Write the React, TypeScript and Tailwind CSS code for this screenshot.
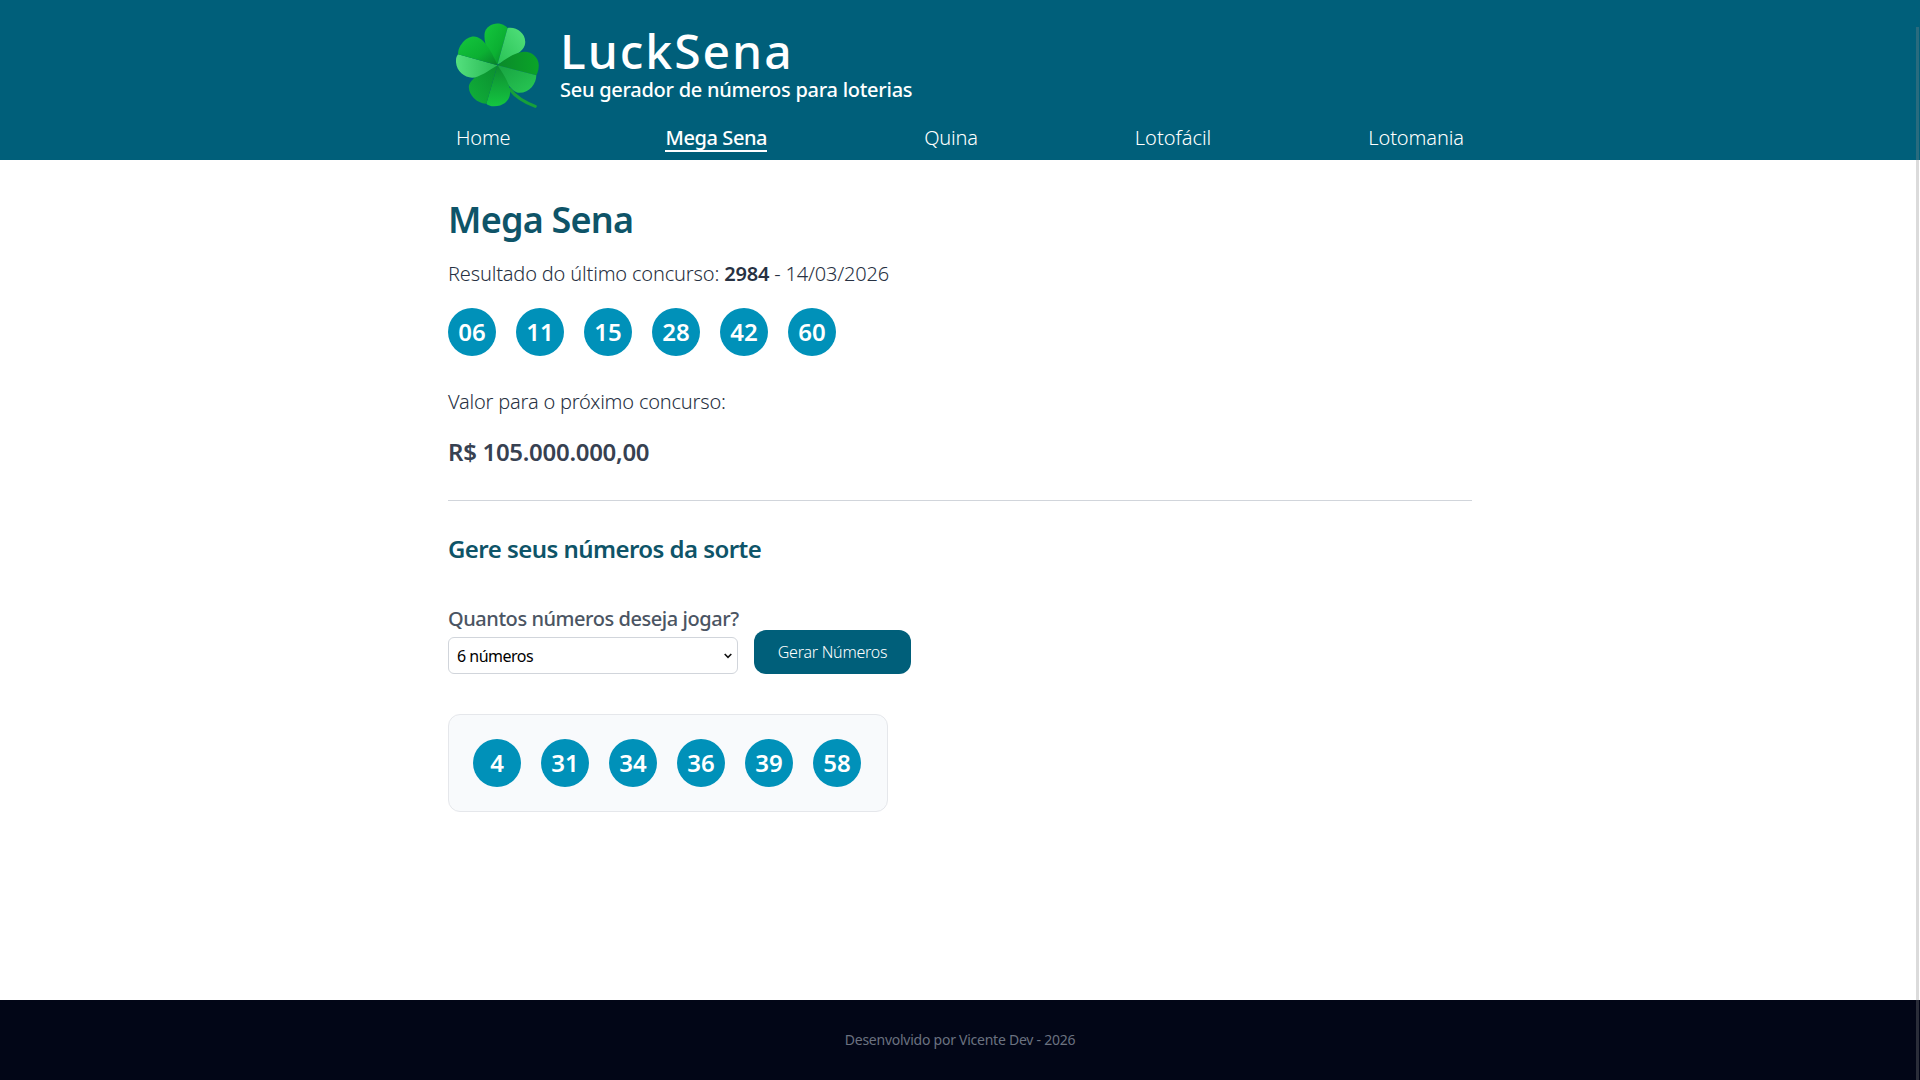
const balls1 = ["06", "11", "15", "28", "42", "60"];
const balls2 = ["4", "31", "34", "36", "39", "58"];

function Clover() {
  return (
    <svg viewBox="37 26 246 250" className="w-[83px] h-[85px] shrink-0" aria-hidden="true">
      <defs>
        <linearGradient id="dk" x1="1" y1="1" x2="0" y2="0"><stop offset="0" stopColor="#07802a" /><stop offset="0.4" stopColor="#0bb032" /><stop offset="1" stopColor="#14c63e" /></linearGradient>
        <linearGradient id="lt" x1="0" y1="1" x2="1" y2="0"><stop offset="0" stopColor="#28c254" /><stop offset="1" stopColor="#52e07c" /></linearGradient>
        <linearGradient id="rd" x1="0" y1="0" x2="1" y2="0"><stop offset="0" stopColor="#0a8a2a" /><stop offset="1" stopColor="#0aa428" /></linearGradient>
        <linearGradient id="rl" x1="0" y1="0" x2="1" y2="1"><stop offset="0" stopColor="#18a341" /><stop offset="1" stopColor="#28c854" /></linearGradient>
        <linearGradient id="bd" x1="0" y1="0" x2="0" y2="1"><stop offset="0" stopColor="#0d8a30" /><stop offset="1" stopColor="#14c640" /></linearGradient>
        <linearGradient id="bl" x1="1" y1="0" x2="0" y2="1"><stop offset="0" stopColor="#0b8f2f" /><stop offset="1" stopColor="#10b03a" /></linearGradient>
        <linearGradient id="ll" x1="1" y1="0" x2="0" y2="0"><stop offset="0" stopColor="#28b852" /><stop offset="1" stopColor="#54e07e" /></linearGradient>
      </defs>
      <path d="M197 222C215 245 240 260 272 272" fill="none" stroke="#17a03a" strokeWidth="9" strokeLinecap="round" />
      <path d="M160 148C135 125 118 85 122 55C125 35 150 22 170 28C180 31 188 36 190 40Z" fill="url(#dk)" />
      <path d="M160 148L190 40C215 35 245 55 242 85C240 110 205 125 160 148Z" fill="url(#lt)" />
      <path d="M160 150C185 130 215 110 240 110C265 110 285 130 282 155C282 165 278 175 275 180Z" fill="url(#rd)" />
      <path d="M160 150L275 180C275 205 255 232 225 232C200 232 175 185 160 150Z" fill="url(#rl)" />
      <path d="M160 150C180 180 200 210 197 235C195 258 175 272 150 272C140 272 130 268 127 264Z" fill="url(#bd)" />
      <path d="M160 150L127 264C100 265 75 240 75 215C75 190 120 165 160 150Z" fill="url(#bl)" />
      <path d="M160 150C135 165 105 187 85 187C60 187 35 165 37 135C37 128 40 122 43 118Z" fill="url(#ll)" />
      <path d="M160 150L43 118C42 95 65 65 90 65C120 65 145 115 160 150Z" fill="url(#dk)" />
    </svg>
  );
}

function Ball({ n }: { n: string }) {
  return (
    <div className="w-12 h-12 rounded-full bg-[#0091b9] text-white text-2xl font-semibold flex items-center justify-center">{n}</div>
  );
}

export default function App() {
  return (
    <div className="min-h-screen flex flex-col bg-white relative font-['Noto_Sans','Lato',sans-serif]">
      <header className="bg-[#005f7a] h-40 shrink-0">
        <div className="w-[1024px] mx-auto px-2">
          <div className="flex items-start gap-[21px] pt-[23px] h-[124px]">
            <Clover />
            <div className="text-white">
              <div className="text-5xl font-medium tracking-[2px] leading-[55px]">LuckSena</div>
              <div className="text-xl font-medium tracking-[-0.27px] leading-6">Seu gerador de números para loterias</div>
            </div>
          </div>
          <nav className="flex justify-between text-xl text-white font-light leading-7">
            <a className="tracking-[-0.2px]">Home</a>
            <a className="font-medium tracking-[-0.4px] border-b-2 border-white h-[28px] -ml-[2px]">Mega Sena</a>
            <a className="tracking-[-0.2px]">Quina</a>
            <a>Lotofácil</a>
            <a className="tracking-[-0.1px]">Lotomania</a>
          </nav>
        </div>
      </header>
      <main className="flex-1 w-[1024px] mx-auto pt-[30px]">
        <h1 className="text-4xl font-semibold tracking-[-0.8px] text-[#0e5468] leading-[60px]">Mega Sena</h1>
        <p className="text-xl font-light tracking-[-0.17px] text-[#273142] leading-7 mt-[10px]">Resultado do último concurso: <b className="font-semibold">2984</b> - 14/03/2026</p>
        <div className="flex gap-5 mt-[20px]">{balls1.map((n) => <Ball key={n} n={n} />)}</div>
        <p className="text-xl font-light tracking-[-0.2px] text-[#273142] leading-7 mt-[32px]">Valor para o próximo concurso:</p>
        <p className="text-2xl font-semibold tracking-[-0.3px] text-[#374151] leading-8 mt-[20px]">R$ 105.000.000,00</p>
        <hr className="border-[#d1d5db] mt-[32px]" />
        <h2 className="text-2xl font-semibold tracking-[-0.55px] text-[#0e5468] leading-8 mt-[32px]">Gere seus números da sorte</h2>
        <div className="flex items-end gap-4 mt-[40px]">
          <div className="flex flex-col w-[290px]">
            <label className="text-xl font-medium tracking-[-0.45px] whitespace-nowrap text-[#4b5563] leading-7">Quantos números deseja jogar?</label>
            <div className="relative mt-[4px]">
              <select className="block w-full h-[37px] pl-[8px] rounded-md border border-[#d1d5db] bg-white text-base tracking-[-0.5px] text-black appearance-none">
                <option>6 números</option>
              </select>
              <svg viewBox="0 0 8 6" className="absolute right-[6px] top-[16px] w-2 h-[6px]" fill="none" stroke="#111" strokeWidth="1.6" aria-hidden="true">
                <path d="M0.7 1L4 4.3L7.3 1" />
              </svg>
            </div>
          </div>
          <button className="h-11 w-[157px] rounded-xl bg-[#005f7a] text-white text-base tracking-[-0.25px] font-light">Gerar Números</button>
        </div>
        <div className="flex gap-5 mt-10 w-[440px] p-6 rounded-xl border border-[#e5e7eb] bg-[#f8fafc]">{balls2.map((n) => <Ball key={n} n={n} />)}</div>
      </main>
      <footer className="h-20 shrink-0 bg-[#020617] flex items-center justify-center text-sm tracking-[-0.25px] text-[#6b7280]">Desenvolvido por Vicente Dev - 2026</footer>
      <div className="absolute right-[1px] top-[27px] bottom-0 w-[3px] bg-[#8888884d]" />
    </div>
  );
}
